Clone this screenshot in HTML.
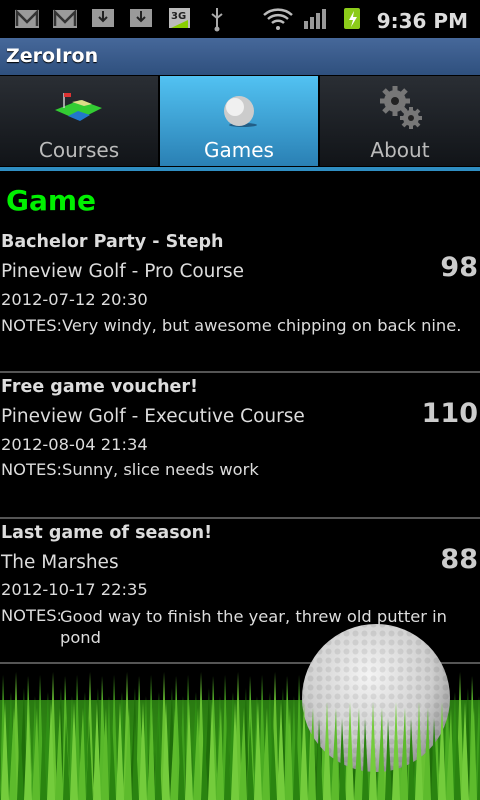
<!DOCTYPE html>
<html><head><meta charset="utf-8"><style>
body{margin:0;width:480px;height:800px;background:#000;position:relative;overflow:hidden;font-family:"DejaVu Sans","Liberation Sans",sans-serif;color:#d8d8d8}
.abs{position:absolute}
#status{left:0;top:0;width:480px;height:38px;background:#000}
#title{left:0;top:38px;width:480px;height:37px;background:linear-gradient(#46689a,#2f507e);color:#fff;font-weight:bold;font-size:19px;line-height:37px;padding-left:6px;box-sizing:border-box;text-shadow:0 1px 1px #000}
.tab{top:76px;height:90px;background:linear-gradient(#2a2e34,#111418);color:#bbb;font-size:20px;text-align:center;box-sizing:border-box;border-right:2px solid #000}
.tab span{position:absolute;left:0;right:0;top:62px}
#g{background:linear-gradient(#52c2f2,#2a80b4);color:#fff}
#tabline{left:0;top:167px;width:480px;height:4px;background:#2f8ec2}
.t{position:absolute;left:1px;white-space:nowrap}
.b{font-weight:bold;font-size:17.5px;color:#ddd}
.c{font-size:18.5px;color:#ddd}
.d{font-size:16.3px;color:#ddd}
.s{position:absolute;right:2px;font-weight:bold;font-size:27px;color:#ccc}
.sep{position:absolute;left:0;width:480px;height:2px;background:#555}
</style></head><body>
<div id="status" class="abs">
<svg width="480" height="38" class="abs" style="left:0;top:0">
<g fill="#9a9a9a"><rect x="15" y="10" width="24" height="18"/><rect x="53" y="10" width="24" height="18"/></g>
<path d="M17 26V12l10 10 10-10v14" stroke="#333" stroke-width="2.5" fill="none"/>
<path d="M55 26V12l10 10 10-10v14" stroke="#333" stroke-width="2.5" fill="none"/>
<rect x="92" y="9" width="22" height="18" fill="#9a9a9a"/><rect x="130" y="9" width="22" height="18" fill="#9a9a9a"/>
<path d="M103 11v10m-4-4l4 4 4-4M141 11v10m-4-4l4 4 4-4" stroke="#222" stroke-width="2" fill="none"/>
<rect x="169" y="8" width="21" height="20" fill="#bbb"/><path d="M171 28l17-8v8z" fill="#8c0"/><text x="171" y="19" font-size="10" font-weight="bold" fill="#222">3G</text>
<path d="M217 8v20M212 14l5 4 5-4" stroke="#aaa" stroke-width="2" fill="none"/><circle cx="217" cy="29" r="2.5" fill="#aaa"/>
<path d="M264 15a21 21 0 0 1 28 0M268 19a15 15 0 0 1 20 0M272 23a9 9 0 0 1 12 0" stroke="#bbb" stroke-width="2.5" fill="none"/><circle cx="278" cy="28" r="2" fill="#bbb"/>
<g fill="#999"><rect x="304" y="21" width="4" height="8"/><rect x="310" y="17" width="4" height="12"/><rect x="316" y="13" width="4" height="16"/><rect x="322" y="9" width="4" height="20"/></g>
<rect x="344" y="8" width="16" height="21" rx="2" fill="#8ccc1a"/><path d="M354 11l-5 9h4l-2 7 6-10h-4z" fill="#fff"/>
<text x="468" y="28" text-anchor="end" font-size="20" font-weight="bold" fill="#ddd" font-family="DejaVu Sans">9:36 PM</text>
</svg></div>
<div id="title" class="abs">ZeroIron</div>
<div class="abs tab" style="left:0;width:160px"><svg class="abs" style="left:50px;top:12px" width="60" height="40"><path d="M5 22l25-10 22 8-24 12z" fill="#3c3"/><path d="M18 28l10-5 12 4-10 6z" fill="#27c"/><path d="M22 14l12 4 8-2-10-4z" fill="#dd8"/><path d="M14 5v15" stroke="#ccc" stroke-width="1.5"/><path d="M14 5h7v4h-7z" fill="#d33"/></svg><span>Courses</span></div>
<div id="g" class="abs tab" style="left:160px;width:160px"><svg class="abs" style="left:55px;top:18px" width="50" height="40"><ellipse cx="28" cy="31" rx="14" ry="2" fill="#135" opacity=".6"/><circle cx="24" cy="17" r="15" fill="#ccc"/><circle cx="20" cy="13" r="9" fill="#f0f0f0"/></svg><span>Games</span></div>
<div class="abs tab" style="left:320px;width:160px;border-right:0"><svg class="abs" style="left:55px;top:8px" width="50" height="50"><g fill="#777"><circle cx="20" cy="17" r="11"/><circle cx="36" cy="34" r="8"/></g><g stroke="#777" stroke-width="5"><path d="M20 2v30M5 17h30M9 6l22 22M31 6L9 28"/><path d="M36 23v22M25 34h22M28 26l16 16M44 26L28 42" stroke-width="4"/></g><circle cx="20" cy="17" r="4" fill="#222"/><circle cx="36" cy="34" r="3" fill="#222"/></svg><span>About</span></div>
<div id="tabline" class="abs"></div>

<div class="t" style="left:6px;top:184px;font-size:28px;font-weight:bold;color:#00f000">Game</div>

<div class="t b" style="top:232px">Bachelor Party - Steph</div>
<div class="t c" style="top:261px">Pineview Golf - Pro Course</div>
<div class="s" style="top:252px">98</div>
<div class="t d" style="top:290px">2012-07-12 20:30</div>
<div class="t d" style="top:316px">NOTES:Very windy, but awesome chipping on back nine.</div>
<div class="sep" style="top:371px"></div>

<div class="t b" style="top:377px">Free game voucher!</div>
<div class="t c" style="top:406px">Pineview Golf - Executive Course</div>
<div class="s" style="top:398px">110</div>
<div class="t d" style="top:435px">2012-08-04 21:34</div>
<div class="t d" style="top:460px">NOTES:Sunny, slice needs work</div>
<div class="sep" style="top:517px"></div>

<div class="t b" style="top:523px">Last game of season!</div>
<div class="t c" style="top:552px">The Marshes</div>
<div class="s" style="top:544px">88</div>
<div class="t d" style="top:580px">2012-10-17 22:35</div>
<div class="t d" style="top:606px">NOTES:</div>
<div class="t d" style="left:60px;top:606px;white-space:normal;width:395px;line-height:21px">Good way to finish the year, threw old putter in pond</div>
<div class="sep" style="top:662px"></div>

<svg class="abs" style="left:0;top:620px" width="480" height="180">
<defs><radialGradient id="ball" cx="0.45" cy="0.35" r="0.7"><stop offset="0" stop-color="#f4f4f4"/><stop offset="0.6" stop-color="#d0d0d0"/><stop offset="1" stop-color="#8a8a8a"/></radialGradient>
<linearGradient id="gr" x1="0" y1="0" x2="0" y2="1"><stop offset="0" stop-color="#2a7a12"/><stop offset="0.5" stop-color="#2e8a12"/><stop offset="1" stop-color="#174f08"/></linearGradient>
<pattern id="p1" width="37" height="180" patternUnits="userSpaceOnUse">
<path d="M0 180L3 55L7 180z" fill="#4aac22"/><path d="M6 180L11 72L14 180z" fill="#2f8f14"/><path d="M12 180L16 52L20 180z" fill="#68c232"/><path d="M19 180L24 68L27 180z" fill="#1f6e0a"/><path d="M25 180L28 56L33 180z" fill="#58b82a"/><path d="M31 180L35 76L38 180z" fill="#3d9e1c"/></pattern>
<pattern id="p2" width="23" height="180" patternUnits="userSpaceOnUse" x="9">
<path d="M0 180L5 88L8 180z" fill="#5dbb2c"/><path d="M8 180L11 98L15 180z" fill="#2a8410"/><path d="M15 180L19 82L23 180z" fill="#74cc3c"/></pattern>
<pattern id="d" width="9" height="9" patternUnits="userSpaceOnUse"><circle cx="4.5" cy="4.5" r="3" fill="#000" opacity=".08"/></pattern>
</defs>
<rect x="0" y="80" width="480" height="100" fill="url(#gr)"/>
<rect x="0" y="0" width="480" height="180" fill="url(#p1)"/>
<circle cx="376" cy="78" r="74" fill="url(#ball)"/>
<circle cx="376" cy="78" r="74" fill="url(#d)"/>
<rect x="0" y="0" width="480" height="180" fill="url(#p2)"/>
</svg>
</body></html>
